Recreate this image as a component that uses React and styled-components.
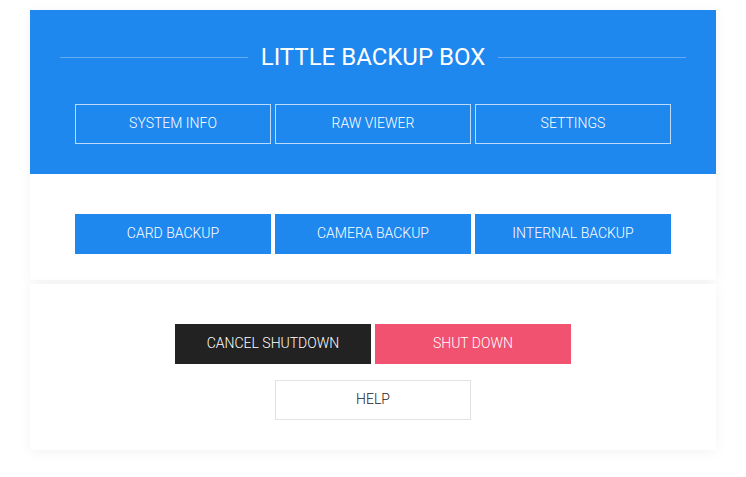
import styled, { createGlobalStyle } from "styled-components";

const GlobalStyle = createGlobalStyle`
  body {
    margin: 0;
    background: #ffffff;
    font-family: Roboto, "Liberation Sans", Arial, sans-serif;
  }
`;

const Page = styled.div`
  padding: 10px 30px 20px 30px;
  display: flex;
  flex-direction: column;
  gap: 4px;
`;

const Card = styled.div`
  background: #ffffff;
  box-shadow: 0 2px 12px rgba(0, 0, 0, 0.05);
  display: flex;
  flex-direction: column;
`;

const Header = styled.div`
  background: #1f88ef;
  padding: 32px 30px 30px 30px;
  display: flex;
  flex-direction: column;
  align-items: center;
  gap: 32px;
`;

const TitleRow = styled.div`
  width: 100%;
  display: flex;
  align-items: center;
  gap: 13px;
`;

const Rule = styled.div`
  flex: 1;
  height: 1px;
  background: rgba(255, 255, 255, 0.3);
`;

const Title = styled.h1`
  margin: 0;
  color: #ffffff;
  font-size: 24px;
  font-weight: 400;
  line-height: 30px;
  text-transform: uppercase;
`;

const Section = styled.div`
  padding: ${(p) => p.$pad || "40px 0 26px 0"};
  display: flex;
  flex-direction: column;
  align-items: center;
  gap: 16px;
`;

const Row = styled.div`
  display: flex;
  justify-content: center;
  gap: 4px;
`;

const variants = {
  outline: "background: transparent; color: #ffffff; border: 1px solid rgba(255,255,255,0.7);",
  blue: "background: #1f88ef; color: #ffffff; border: 1px solid #1f88ef;",
  dark: "background: #222222; color: #ffffff; border: 1px solid #222222;",
  pink: "background: #f0526f; color: #ffffff; border: 1px solid #f0526f;",
  light: "background: #ffffff; color: #222222; border: 1px solid #e2e2e2;",
};

const Button = styled.button`
  box-sizing: border-box;
  width: 196px;
  height: 40px;
  padding: 0 0 3px 0;
  font-family: Roboto, "Liberation Sans", Arial, sans-serif;
  font-size: 14px;
  font-weight: 300;
  text-transform: uppercase;
  cursor: pointer;
  ${(p) => variants[p.$variant]}
`;

export default function App() {
  return (
    <>
      <GlobalStyle />
      <Page>
        <Card>
          <Header>
            <TitleRow>
              <Rule />
              <Title>Little Backup Box</Title>
              <Rule />
            </TitleRow>
            <Row>
              <Button $variant="outline">System Info</Button>
              <Button $variant="outline">Raw Viewer</Button>
              <Button $variant="outline">Settings</Button>
            </Row>
          </Header>
          <Section>
            <Row>
              <Button $variant="blue">Card Backup</Button>
              <Button $variant="blue">Camera Backup</Button>
              <Button $variant="blue">Internal Backup</Button>
            </Row>
          </Section>
        </Card>
        <Card>
          <Section $pad="40px 0 30px 0">
            <Row>
              <Button $variant="dark">Cancel Shutdown</Button>
              <Button $variant="pink">Shut Down</Button>
            </Row>
            <Button $variant="light">Help</Button>
          </Section>
        </Card>
      </Page>
    </>
  );
}
